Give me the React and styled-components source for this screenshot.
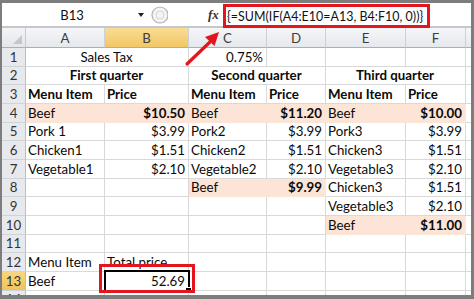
import React from "react";
import styled, { createGlobalStyle } from "styled-components";

const GlobalStyle = createGlobalStyle`
  html, body {
    margin: 0;
    padding: 0;
    background: #7d7d7d;
  }
  body {
    font-family: "Lato", "Liberation Sans", sans-serif;
  }
`;

const PEACH = "#fce4d6";
const GRID = "#d9d9d9";

const Window = styled.div`
  position: relative;
  width: 474px;
  height: 299px;
  box-sizing: border-box;
  padding: 3px 3px 4px 2px;
  background: #7d7d7d;
  display: flex;
  flex-direction: column;
  overflow: hidden;
`;

const FormulaBar = styled.div`
  display: flex;
  align-items: center;
  height: 23px;
  background: #fff;
  border-bottom: 2px solid #c4c7cc;
  font-size: 13px;
  color: #111;
`;

const NameBox = styled.div`
  width: 146px;
  height: 100%;
  display: flex;
  align-items: center;
  box-sizing: border-box;
  padding-right: 4px;
`;

const NameText = styled.span`
  flex: 1;
  text-align: center;
  padding-left: 4px;
`;

const DropArrow = styled.span`
  width: 0;
  height: 0;
  border-left: 3.5px solid transparent;
  border-right: 3.5px solid transparent;
  border-top: 4px solid #222;
`;

const Splitter = styled.svg`
  width: 18px;
  height: 20px;
  margin-left: 2px;
`;

const FxLabel = styled.span`
  margin-left: 40px;
  width: 15px;
  font-family: "Liberation Serif", serif;
  font-style: italic;
  font-weight: bold;
  font-size: 13px;
  color: #333;
`;

const FormulaField = styled.div`
  flex: 1;
  height: 100%;
  display: flex;
  align-items: stretch;
`;

const FormulaBox = styled.div`
  display: flex;
  align-items: center;
  margin-top: 1px;
  margin-bottom: -2px;
  padding: 0 4px 0 1px;
  border: 3px solid #e3161f;
  font-size: 12.4px;
  letter-spacing: 0.05px;
  background: #fff;
  position: relative;
  z-index: 2;
`;

const Sheet = styled.div`
  flex: 1;
  display: grid;
  grid-template-columns: 24px 79px 84px 78px 59px 80px 60px 1fr;
  grid-template-rows: 20px repeat(14, 18.67px);
  background: #fff;
  overflow: hidden;
  font-size: 13.3px;
  color: #0a0a0a;
`;

const Corner = styled.div`
  position: relative;
  background: linear-gradient(#f3f4f6, #e3e6ea);
  border-right: 1px solid #c8ccd2;
  border-bottom: 1px solid #a9afb8;
  &::after {
    content: "";
    position: absolute;
    right: 3px;
    bottom: 3px;
    border-left: 9px solid transparent;
    border-bottom: 9px solid #c3c6cb;
  }
`;

const ColHead = styled.div`
  display: flex;
  align-items: center;
  justify-content: center;
  color: #3d3d3d;
  background: ${(p) =>
    p.$active
      ? "linear-gradient(#f9dc94, #f1c765)"
      : "linear-gradient(#f5f6f8, #e5e8ec)"};
  border-right: 1px solid #cdd1d6;
  border-bottom: 1px solid #a9afb8;
`;

const RowHead = styled.div`
  display: flex;
  align-items: center;
  justify-content: center;
  color: #333;
  background: ${(p) =>
    p.$active ? "linear-gradient(#f7d680, #f0c25c)" : "#e7e9ec"};
  border-right: 1px solid #b9bec6;
  border-bottom: 1px solid #cfd3d8;
`;

const Cell = styled.div`
  position: ${(p) => (p.$selected ? "relative" : "static")};
  grid-column: span ${(p) => p.$span || 1};
  display: flex;
  align-items: center;
  justify-content: ${(p) =>
    p.$align === "right"
      ? "flex-end"
      : p.$align === "center"
      ? "center"
      : "flex-start"};
  padding: 0 3px 0 2px;
  white-space: nowrap;
  font-weight: ${(p) => (p.$bold ? 700 : 400)};
  background: ${(p) => (p.$hl ? PEACH : "#fff")};
  border-right: 1px solid ${(p) => (p.$hl ? PEACH : GRID)};
  border-bottom: 1px solid ${(p) => (p.$hl ? PEACH : GRID)};
  min-width: 0;
`;

const SelectBorder = styled.span`
  position: absolute;
  inset: -2px -2px -2px -1px;
  border: 2.5px solid #000;
  pointer-events: none;
  &::after {
    content: "";
    position: absolute;
    right: -4px;
    bottom: -4px;
    width: 5px;
    height: 5px;
    background: #000;
    border: 1px solid #fff;
  }
`;

const RedFrame = styled.span`
  position: absolute;
  inset: -8px -7px -3px -6px;
  border: 3px solid #e3161f;
  pointer-events: none;
  z-index: 3;
`;

const Arrow = styled.svg`
  position: absolute;
  left: 0;
  top: 0;
  width: 474px;
  height: 299px;
  pointer-events: none;
  z-index: 4;
`;

const c = (text, opts = {}) => ({ text, ...opts });
const price = (text, hl) => c(text, { align: "right", bold: hl, hl });
const item = (text, hl) => c(text, { hl });
const blank = () => c("");

const rows = [
  [
    c("Sales Tax", { span: 2, align: "center" }),
    c("0.75%", { align: "right" }),
    blank(),
    blank(),
    blank(),
  ],
  [
    c("First quarter", { span: 2, align: "center", bold: true }),
    c("Second quarter", { span: 2, align: "center", bold: true }),
    c("Third quarter", { span: 2, align: "center", bold: true }),
  ],
  [
    c("Menu Item", { bold: true }),
    c("Price", { bold: true }),
    c("Menu Item", { bold: true }),
    c("Price", { bold: true }),
    c("Menu Item", { bold: true }),
    c("Price", { bold: true }),
  ],
  [
    item("Beef", true),
    price("$10.50", true),
    item("Beef", true),
    price("$11.20", true),
    item("Beef", true),
    price("$10.00", true),
  ],
  [
    item("Pork 1"),
    price("$3.99"),
    item("Pork2"),
    price("$3.99"),
    item("Pork3"),
    price("$3.99"),
  ],
  [
    item("Chicken1"),
    price("$1.51"),
    item("Chicken2"),
    price("$1.51"),
    item("Chicken3"),
    price("$1.51"),
  ],
  [
    item("Vegetable1"),
    price("$2.10"),
    item("Vegetable2"),
    price("$2.10"),
    item("Vegetable3"),
    price("$2.10"),
  ],
  [
    blank(),
    blank(),
    item("Beef", true),
    price("$9.99", true),
    item("Chicken3"),
    price("$1.51"),
  ],
  [blank(), blank(), blank(), blank(), item("Vegetable3"), price("$2.10")],
  [blank(), blank(), blank(), blank(), item("Beef", true), price("$11.00", true)],
  [blank(), blank(), blank(), blank(), blank(), blank()],
  [item("Menu Item"), item("Total price"), blank(), blank(), blank(), blank()],
  [
    item("Beef"),
    c("52.69", { align: "right", selected: true }),
    blank(),
    blank(),
    blank(),
    blank(),
  ],
  [blank(), blank(), blank(), blank(), blank(), blank()],
];

const columns = ["A", "B", "C", "D", "E", "F", ""];
const ACTIVE_COL = "B";
const ACTIVE_ROW = 13;

export default function App() {
  return (
    <>
      <GlobalStyle />
      <Window>
        <FormulaBar>
          <NameBox>
            <NameText>B13</NameText>
            <DropArrow />
          </NameBox>
          <Splitter viewBox="0 0 18 20">
            <circle cx="10" cy="10" r="8" fill="#f4f4f4" stroke="#b3b3b3" strokeWidth="1.2" />
            <circle cx="10" cy="10" r="4" fill="none" stroke="#d6d6d6" strokeWidth="1" />
          </Splitter>
          <FxLabel>fx</FxLabel>
          <FormulaField>
            <FormulaBox>{"{=SUM(IF(A4:E10=A13, B4:F10, 0))}"}</FormulaBox>
          </FormulaField>
        </FormulaBar>

        <Sheet>
          <Corner />
          {columns.map((col, i) => (
            <ColHead key={i} $active={col === ACTIVE_COL}>
              {col}
            </ColHead>
          ))}

          {rows.map((cells, r) => (
            <React.Fragment key={r}>
              <RowHead $active={r + 1 === ACTIVE_ROW}>{r + 1}</RowHead>
              {cells.map((cell, i) => (
                <Cell
                  key={i}
                  $span={cell.span}
                  $align={cell.align}
                  $bold={cell.bold}
                  $hl={cell.hl}
                  $selected={cell.selected}
                >
                  {cell.text}
                  {cell.selected && (
                    <>
                      <SelectBorder />
                      <RedFrame />
                    </>
                  )}
                </Cell>
              ))}
              <Cell />
            </React.Fragment>
          ))}
        </Sheet>

        <Arrow viewBox="0 0 474 299">
          <line
            x1="187"
            y1="64"
            x2="211"
            y2="41"
            stroke="#e3161f"
            strokeWidth="3.2"
            strokeLinecap="round"
          />
          <polygon points="219,32 214.5,46 205,37" fill="#e3161f" />
        </Arrow>
      </Window>
    </>
  );
}
